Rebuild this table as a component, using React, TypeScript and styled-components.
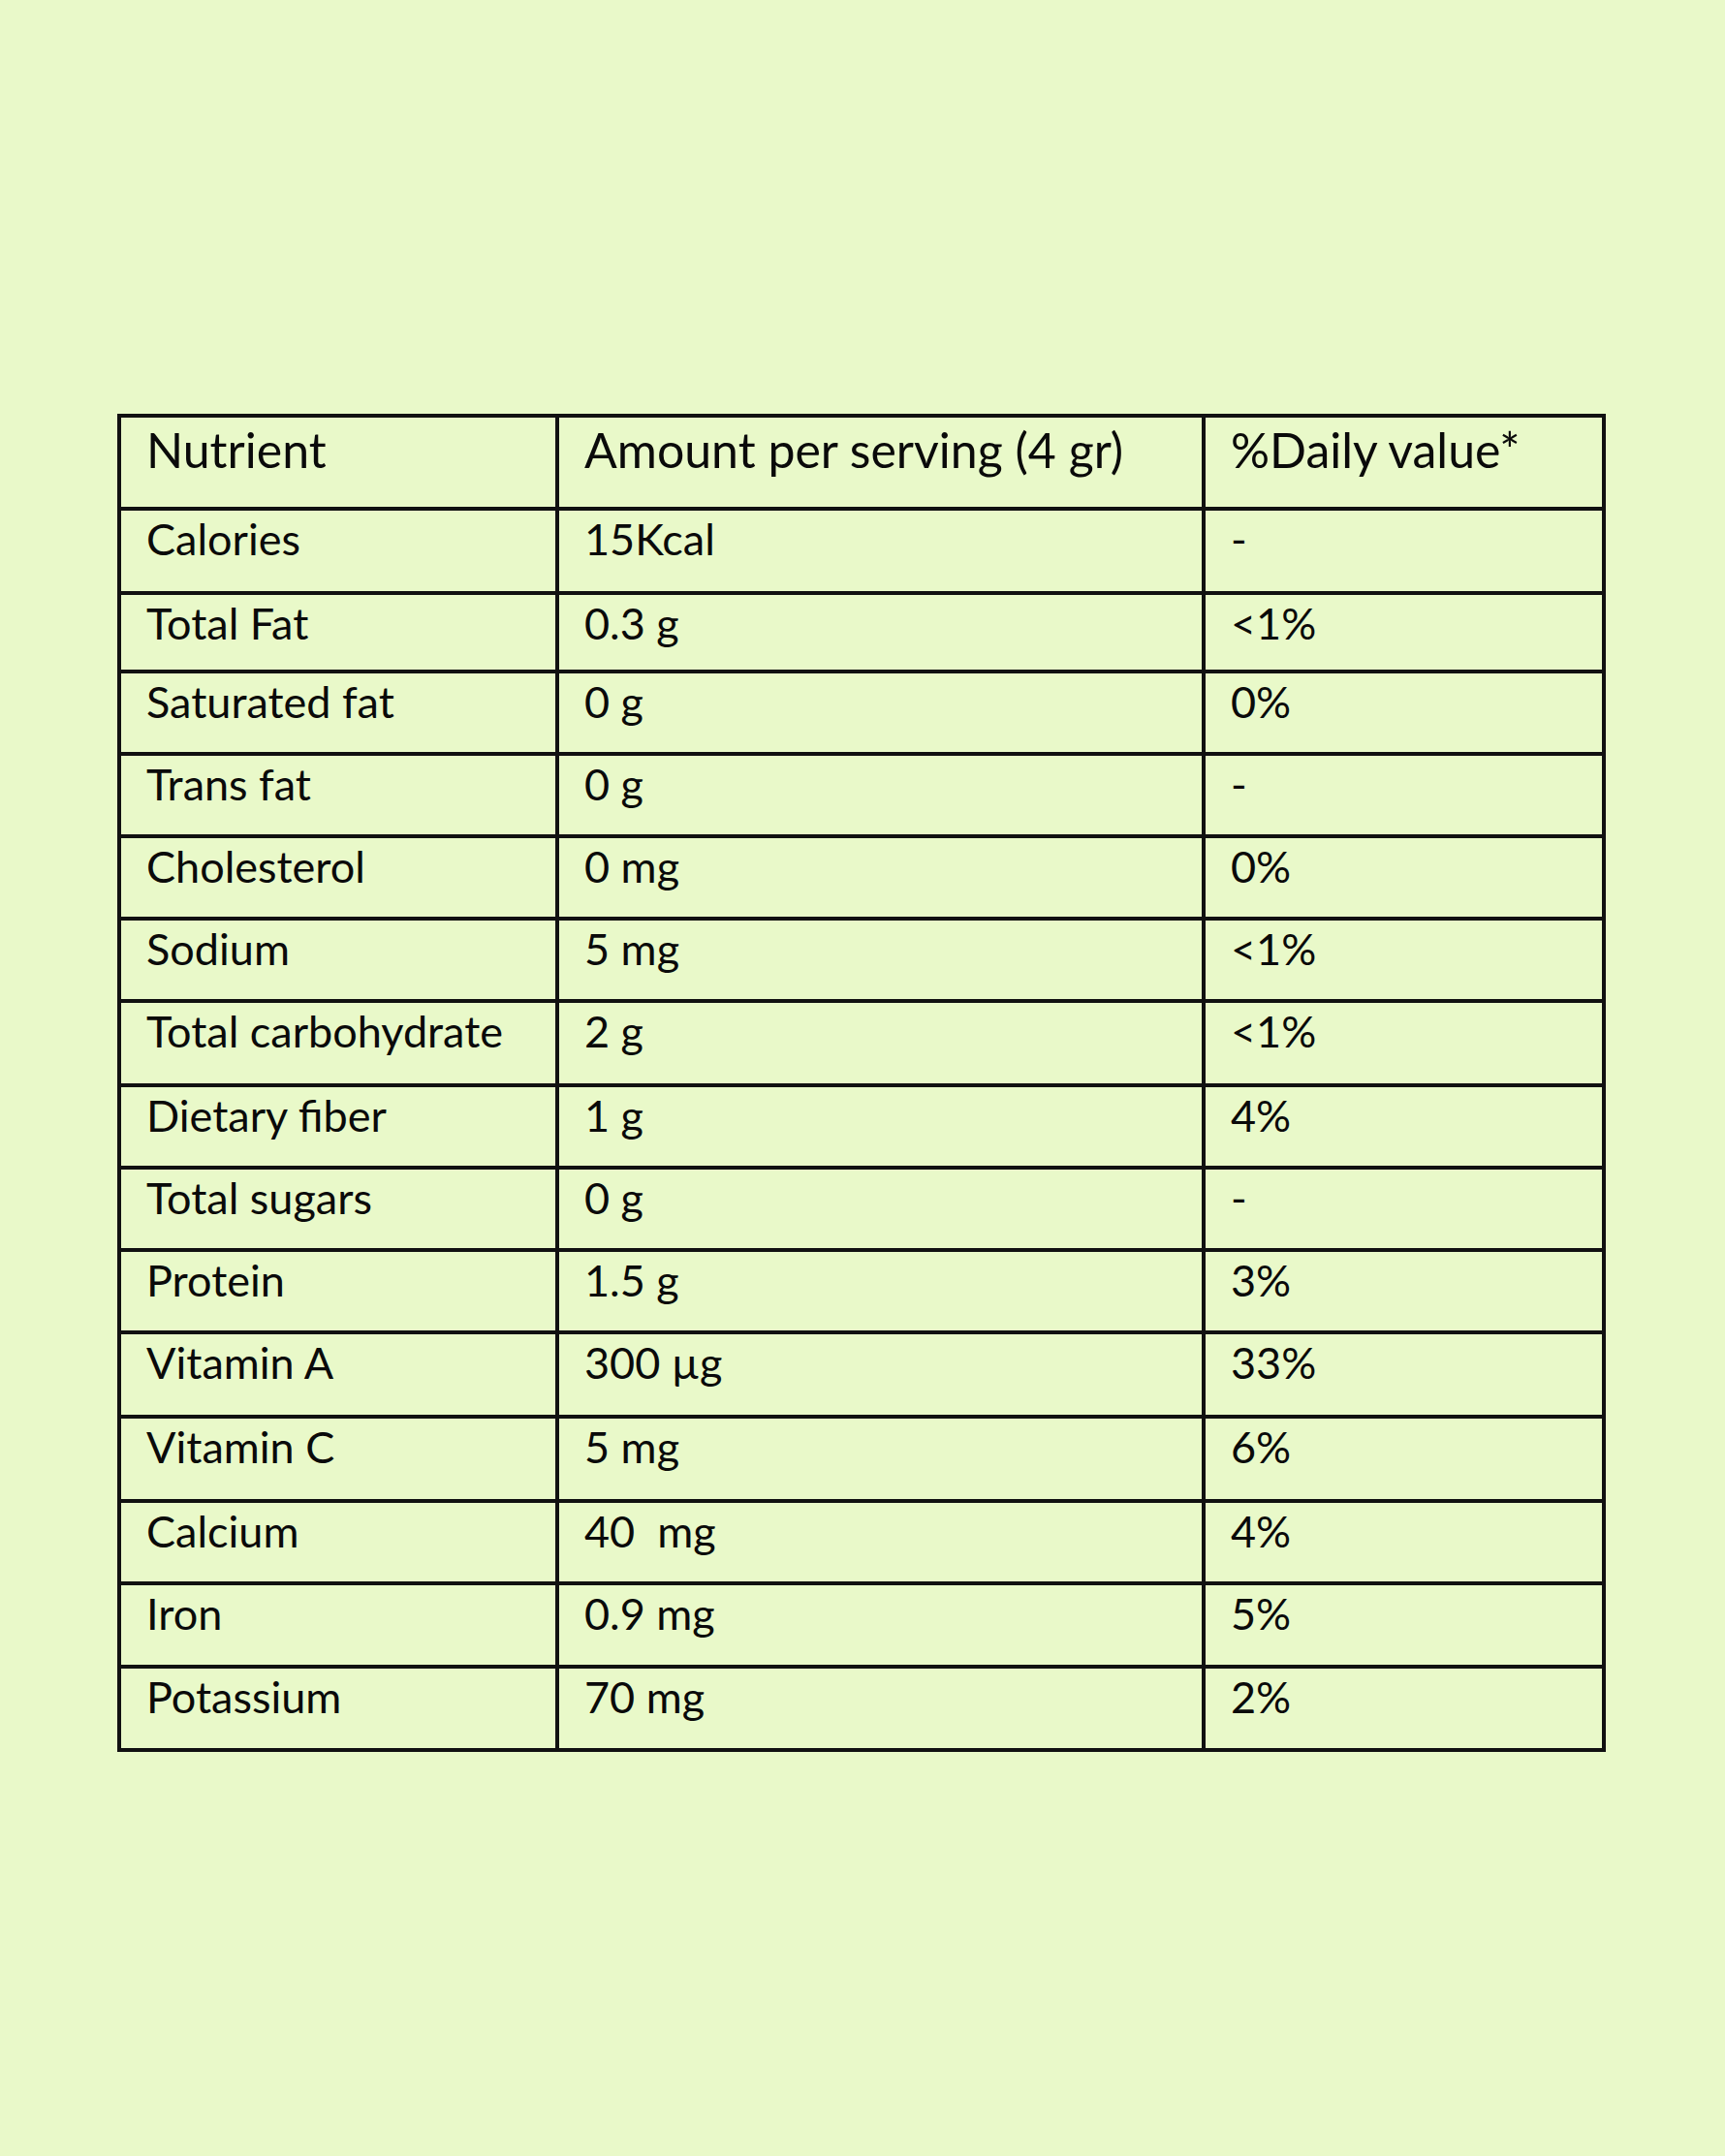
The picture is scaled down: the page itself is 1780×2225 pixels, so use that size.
import { createGlobalStyle } from 'styled-components';
import styled from 'styled-components';

const GlobalStyle = createGlobalStyle`
  html, body {
    margin: 0;
    padding: 0;
    background: #e9f9c9;
  }
`;

const Page = styled.div`
  width: 1780px;
  min-height: 2225px;
  box-sizing: border-box;
  padding: 427px 0 0 121px;
  background: #e9f9c9;
  font-family: Lato, "Open Sans", sans-serif;
  color: #0a0a0a;
`;

const Table = styled.table`
  border-collapse: collapse;
  table-layout: fixed;
  width: 1532px;
  border: 4px solid #111;
`;

const Row = styled.tr<{ $h: number }>`
  height: ${p => p.$h}px;
`;

const HeadCell = styled.th`
  text-align: left;
  vertical-align: top;
  font-weight: 400;
  font-size: 50px;
  line-height: 1.2;
  padding: 3px 0 0 26px;
  border: 4px solid #111;
`;

const Cell = styled.td`
  vertical-align: top;
  font-size: 45px;
  line-height: 1.2;
  padding: 2px 0 0 26px;
  border: 4px solid #111;
  white-space: pre;
`;

const rows: [string, string, string, number][] = [
  ['Calories', '15Kcal', '-', 87],
  ['Total Fat', '0.3 g', '<1%', 81],
  ['Saturated fat', '0 g', '0%', 85],
  ['Trans fat', '0 g', '-', 85],
  ['Cholesterol', '0 mg', '0%', 85],
  ['Sodium', '5 mg', '<1%', 85],
  ['Total carbohydrate', '2 g', '<1%', 87],
  ['Dietary fiber', '1 g', '4%', 85],
  ['Total sugars', '0 g', '-', 85],
  ['Protein', '1.5 g', '3%', 85],
  ['Vitamin A', '300 µg', '33%', 87],
  ['Vitamin C', '5 mg', '6%', 87],
  ['Calcium', '40  mg', '4%', 85],
  ['Iron', '0.9 mg', '5%', 86],
  ['Potassium', '70 mg', '2%', 86],
];

export default function App() {
  return (
    <>
      <GlobalStyle />
      <Page>
        <Table>
          <colgroup>
            <col style={{ width: 452 }} />
            <col style={{ width: 667 }} />
            <col style={{ width: 413 }} />
          </colgroup>
          <thead>
            <Row $h={96}>
              <HeadCell>Nutrient</HeadCell>
              <HeadCell>Amount per serving (4 gr)</HeadCell>
              <HeadCell>%Daily value*</HeadCell>
            </Row>
          </thead>
          <tbody>
            {rows.map(([name, amount, daily, h]) => (
              <Row key={name} $h={h}>
                <Cell>{name}</Cell>
                <Cell>{amount}</Cell>
                <Cell>{daily}</Cell>
              </Row>
            ))}
          </tbody>
        </Table>
      </Page>
    </>
  );
}
